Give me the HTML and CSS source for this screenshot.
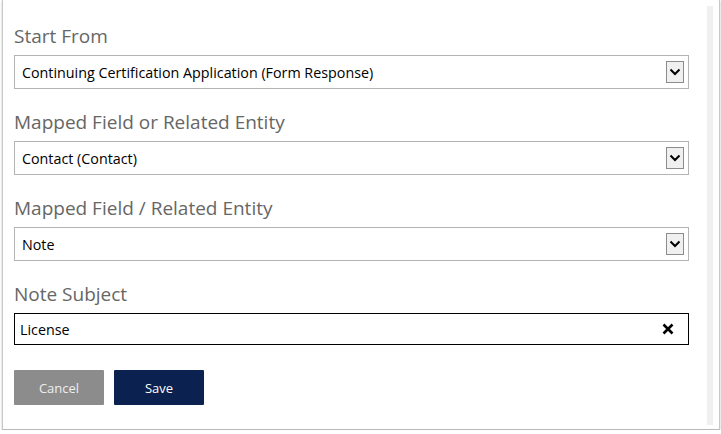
FILE: index.html
```html
<!DOCTYPE html>
<html>
<head>
<meta charset="utf-8">
<link rel="stylesheet" href="styles.css">
</head>
<body>
<div class="frame">
  <div class="content">
    <div class="group">
      <div class="label">Start From</div>
      <div class="select"><span>Continuing Certification Application (Form Response)</span><span class="drop"><svg width="12" height="8" viewBox="0 0 12 8"><path d="M1.5 1.5 L6 6 L10.5 1.5" fill="none" stroke="#000" stroke-width="2"/></svg></span></div>
    </div>
    <div class="group">
      <div class="label">Mapped Field or Related Entity</div>
      <div class="select"><span>Contact (Contact)</span><span class="drop"><svg width="12" height="8" viewBox="0 0 12 8"><path d="M1.5 1.5 L6 6 L10.5 1.5" fill="none" stroke="#000" stroke-width="2"/></svg></span></div>
    </div>
    <div class="group">
      <div class="label">Mapped Field / Related Entity</div>
      <div class="select"><span>Note</span><span class="drop"><svg width="12" height="8" viewBox="0 0 12 8"><path d="M1.5 1.5 L6 6 L10.5 1.5" fill="none" stroke="#000" stroke-width="2"/></svg></span></div>
    </div>
    <div class="group">
      <div class="label">Note Subject</div>
      <div class="input"><span>License</span><svg class="clear" width="12" height="12" viewBox="0 0 12 12"><path d="M1.5 1.5 L10.5 10.5 M10.5 1.5 L1.5 10.5" stroke="#000" stroke-width="2.6"/></svg></div>
    </div>
    <div class="buttons">
      <button class="btn cancel">Cancel</button>
      <button class="btn save">Save</button>
    </div>
  </div>
  <div class="scroll"></div>
</div>
</body>
</html>
```
FILE: styles.css
```css
html, body {
  margin: 0;
  padding: 0;
  background: #fff;
}
body {
  font-family: "Open Sans", "Liberation Sans", sans-serif;
}
.frame {
  margin: 0 1px 0 2px;
  height: 429px;
  border-left: 1px solid #c8c8c8;
  border-right: 1px solid #c8c8c8;
  border-bottom: 1px solid #b8b8b8;
  box-shadow: 0 1px 2px rgba(0,0,0,0.25);
  display: flex;
  background: #fff;
}
.content {
  flex: 1;
  padding: 22px 0 0 11px;
}
.scroll {
  width: 6px;
  margin: 6px 6px 4px 0;
  background: #f0f0f0;
}
.group {
  margin-bottom: 19px;
}
.label {
  font-size: 19px;
  line-height: 28px;
  color: #666;
  margin-bottom: 5px;
}
.select, .input {
  width: 675px;
  height: 34px;
  box-sizing: border-box;
  border: 1px solid #b4b4b4;
  display: flex;
  align-items: center;
  justify-content: space-between;
  padding: 0 4px 0 7px;
  font-size: 14.3px;
  color: #000;
}
.drop {
  width: 18px;
  height: 22px;
  box-sizing: border-box;
  border: 1px solid #8c8c8c;
  background: #f0f0f0;
  display: flex;
  align-items: center;
  justify-content: center;
}
.input {
  height: 32px;
  border-color: #000;
  padding: 0 14px 0 5px;
}
.buttons {
  display: flex;
  gap: 10px;
  margin-top: 25px;
}
.btn {
  width: 90px;
  height: 35px;
  border: none;
  border-radius: 1px;
  font-family: "Open Sans", "Liberation Sans", sans-serif;
  font-size: 13px;
  padding: 0;
}
.cancel {
  background: #8c8c8c;
  color: #eee;
}
.save {
  background: #0b2150;
  color: #fff;
}
```
